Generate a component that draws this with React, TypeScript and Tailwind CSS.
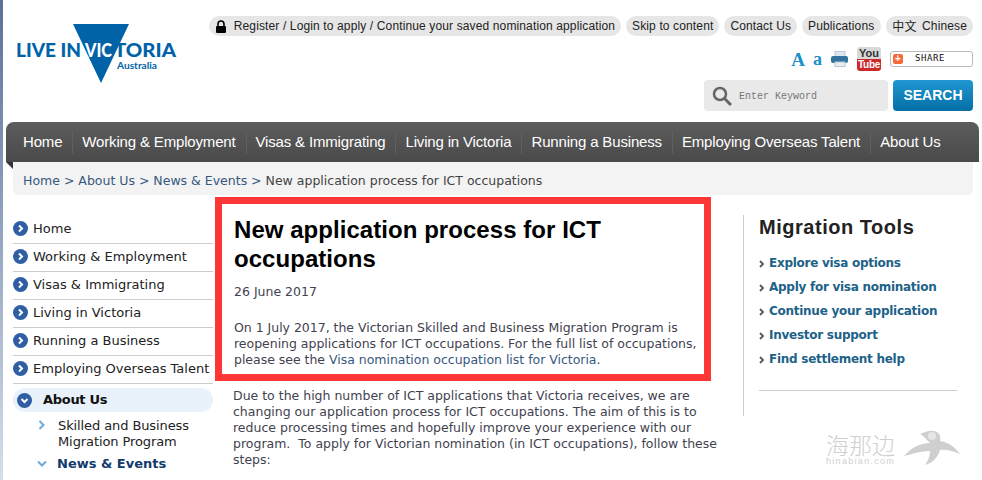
const navTop = ["Home", "Working & Employment", "Visas & Immigrating", "Living in Victoria", "Running a Business", "Employing Overseas Talent", "About Us"];
const sideNav = ["Home", "Working & Employment", "Visas & Immigrating", "Living in Victoria", "Running a Business", "Employing Overseas Talent"];
const tools = ["Explore visa options", "Apply for visa nomination", "Continue your application", "Investor support", "Find settlement help"];

function Dot({ down = false }: { down?: boolean }) {
  return (
    <svg width="15" height="15" viewBox="0 0 15 15" className="shrink-0">
      <circle cx="7.5" cy="7.5" r="7.5" fill="#2f5ea5" />
      <path d={down ? "M4.5 6 L7.5 9 L10.5 6" : "M6 4.5 L9 7.5 L6 10.5"} fill="none" stroke="#fff" strokeWidth="2" />
    </svg>
  );
}

function Pill({ children }: { children: React.ReactNode }) {
  return (
    <span className="flex h-5 items-center rounded-full bg-[#e6e6e6] px-[6px] text-[12px] tracking-[0.13px] whitespace-nowrap text-[#222]">{children}</span>
  );
}

export default function App() {
  return (
    <div className="relative flex h-[480px] w-[982px] overflow-hidden bg-white font-['Liberation_Sans',sans-serif]">
      <div className="h-full w-[3px] shrink-0 bg-gradient-to-b from-[#5a7299] to-[#d5deea]" />
      <div className="flex w-[979px] flex-col">
        <header className="flex h-[122px] shrink-0 justify-between pl-[12px] pr-[9px]">
          <svg width="164" height="62" viewBox="0 0 164 62" className="mt-[23px]">
            <polygon points="58,1 114,1 86,60" fill="#0063a8" />
            <text x="1" y="34" textLength="65" lengthAdjust="spacingAndGlyphs" fontFamily="Lato, sans-serif" fontWeight="900" fontSize="19" fill="#0063a8">LIVE IN</text>
            <text x="70" y="34" textLength="27" lengthAdjust="spacingAndGlyphs" fontFamily="Lato, sans-serif" fontWeight="900" fontSize="19" fill="#fff">VIC</text>
            <text x="99" y="34" textLength="62" lengthAdjust="spacingAndGlyphs" fontFamily="Lato, sans-serif" fontWeight="900" fontSize="19" fill="#0063a8">TORIA</text>
            <text x="102" y="46" textLength="40" lengthAdjust="spacingAndGlyphs" fontFamily="Lato, sans-serif" fontWeight="700" fontSize="9" fill="#0063a8">Australia</text>
          </svg>
          <div className="flex flex-col items-end pt-4">
            <div className="flex gap-[5px]">
              <Pill>
                <svg width="12" height="13" viewBox="0 0 12 13" className="mr-[7px]">
                  <path d="M3 6V4a3 3 0 0 1 6 0v2" fill="none" stroke="#000" strokeWidth="1.6" />
                  <rect x="1" y="6" width="10" height="7" rx="1" fill="#000" />
                </svg>
                Register / Login to apply / Continue your saved nomination application
              </Pill>
              <Pill>Skip to content</Pill>
              <Pill>Contact Us</Pill>
              <Pill><span className="pr-[1px]">Publications</span></Pill>
              <Pill><span className="pr-[2px] font-['Noto_Sans_CJK_SC',sans-serif]">中文</span>&nbsp;Chinese</Pill>
            </div>
            <div className="mt-[11px] flex h-6 items-center">
              <span className="font-['Liberation_Serif',serif] text-[19px] leading-none font-bold text-[#2090c8]">A</span>
              <span className="ml-[8px] font-['Liberation_Serif',serif] text-[18px] leading-none font-bold text-[#2090c8]">a</span>
              <svg width="18" height="16" viewBox="0 0 18 16" className="ml-[9px]">
                <rect x="4" y="0.5" width="10" height="6" fill="#dfe7ee" stroke="#b9c6d3" />
                <rect x="0" y="5" width="17" height="7" rx="2" fill="#33749f" />
                <rect x="4" y="11" width="10" height="4.5" fill="#e9eef3" stroke="#b9c6d3" />
              </svg>
              <div className="ml-[8px] flex h-6 w-[24px] flex-col items-center overflow-hidden rounded-[3px] text-center font-bold">
                <span className="h-[12px] w-full bg-[#d8d8d8] text-[11px] leading-[12px] text-[#333]">You</span>
                <span className="h-[12px] w-full bg-[#cc2a2a] text-[10px] leading-[12px] tracking-[-0.3px] text-white">Tube</span>
              </div>
              <div className="ml-[9px] flex h-4 w-[83px] items-center rounded-[3px] border border-[#bbb] bg-white pl-[2px]">
                <span className="flex h-[10px] w-[10px] items-center justify-center rounded-[2px] bg-[#f8693a] text-[10px] leading-none font-bold text-white">+</span>
                <span className="ml-[12px] font-['DejaVu_Sans_Mono',monospace] text-[9px] tracking-[0.6px] text-[#111]">SHARE</span>
              </div>
            </div>
            <div className="mt-[9px] flex gap-[5px]">
              <div className="flex h-[31px] w-[184px] items-center rounded-[4px] bg-[#e9e9e9] pl-[8px]">
                <svg width="20" height="20" viewBox="0 0 20 20">
                  <circle cx="8" cy="8" r="6" fill="none" stroke="#666" strokeWidth="2.6" />
                  <path d="M12.5 12.5 L19 19" stroke="#666" strokeWidth="3" />
                </svg>
                <span className="ml-[7px] pt-[1px] font-['Liberation_Mono',monospace] text-[10px] text-[#777]">Enter Keyword</span>
              </div>
              <button className="h-[31px] w-[80px] rounded-[4px] bg-gradient-to-b from-[#1f97d2] to-[#046fa5] text-[14px] font-bold text-white">SEARCH</button>
            </div>
          </div>
        </header>

        <nav className="relative ml-[3px] flex h-[40px] w-[973px] shrink-0 items-center rounded-t-[8px] bg-gradient-to-b from-[#5c5c5c] to-[#4a4a4a] pt-[1px] pl-[14px] text-[15px] tracking-[-0.165px] whitespace-nowrap text-white">
          {navTop.map((n, i) => (
            <span key={n} className={i === 0 ? "pl-[3px] pr-[10px]" : "border-l border-[#5f5f5f] pl-[9px] pr-[10px]"}>{n}</span>
          ))}
          <svg width="7" height="7" viewBox="0 0 7 7" className="absolute top-full left-0">
            <polygon points="0,0 7,0 7,7" fill="#333" />
          </svg>
        </nav>
        <div className="ml-[10px] flex h-[33px] w-[960px] shrink-0 items-center rounded-b-[6px] bg-[#f3f3f3] pt-[6px] pl-[10px] font-['DejaVu_Sans',sans-serif] text-[12.5px] text-[#36587f]">
          Home &gt; About Us &gt; News &amp; Events &gt;&nbsp;<span className="text-[#444]">New application process for ICT occupations</span>
        </div>

        <main className="flex min-h-0 flex-1 font-['DejaVu_Sans',sans-serif] text-[12.5px] leading-[16px] text-[#42424f]">
          <aside className="ml-[10px] w-[200px] shrink-0 pt-[21px] text-[#222]">
            {sideNav.map((n) => (
              <div key={n} className="flex h-[28px] items-center gap-[5px] border-b border-[#ccc] pb-[2px] text-[13px] whitespace-nowrap">
                <Dot />
                <span>{n}</span>
              </div>
            ))}
            <div className="mt-[4px] flex h-[24px] items-center gap-[11px] rounded-full bg-[#e9f2fa] pl-[4px] text-[13px] font-bold tracking-[-0.3px] text-[#111]">
              <Dot down />
              <span>About Us</span>
            </div>
            <div className="mt-[6px] flex gap-[12px] pl-[25px] text-[13px] tracking-[-0.1px]">
              <svg width="8" height="10" viewBox="0 0 8 10" className="mt-[2px] shrink-0"><path d="M1.5 1 L5.5 5 L1.5 9" fill="none" stroke="#6fa9d8" strokeWidth="2" /></svg>
              <span>Skilled and Business<br />Migration Program</span>
            </div>
            <div className="mt-[6px] flex items-center gap-[10px] pl-[24px] text-[13px] font-bold text-[#123a6b]">
              <svg width="10" height="8" viewBox="0 0 10 8" className="shrink-0"><path d="M1 1.5 L5 5.5 L9 1.5" fill="none" stroke="#6fa9d8" strokeWidth="2" /></svg>
              <span>News &amp; Events</span>
            </div>
          </aside>

          <section className="ml-[2px] w-[496px] shrink-0 pt-[2px]">
            <div className="h-[184px] border-[7px] border-[#ff3636] pt-[11px] pl-[12px]">
              <h1 className="font-['Liberation_Sans',sans-serif] text-[24px] leading-[29px] font-bold tracking-[0.05px] text-black">New application process for ICT occupations</h1>
              <p className="mt-[11px]">26 June 2017</p>
              <p className="mt-[20px] tracking-[-0.02px] whitespace-nowrap">
                On 1 July 2017, the Victorian Skilled and Business Migration Program is<br />
                reopening applications for ICT occupations. For the full list of occupations,<br />
                please see the <span className="text-[#36587f]">Visa nomination occupation list for Victoria</span>.
              </p>
            </div>
            <p className="mt-[7px] pl-[18px] whitespace-nowrap">
              Due to the high number of ICT applications that Victoria receives, we are<br />
              changing our application process for ICT occupations. The aim of this is to<br />
              reduce processing times and hopefully improve your experience with our<br />
              program.&nbsp; To apply for Victorian nomination (in ICT occupations), follow these<br />
              steps:
            </p>
          </section>

          <aside className="mt-[20px] ml-[32px] h-[201px] w-[214px] shrink-0 border-l border-[#ccc] pl-[15px]">
            <h2 className="font-['Liberation_Sans',sans-serif] text-[20px] leading-[24px] font-bold tracking-[0.53px] text-[#222]">Migration Tools</h2>
            <ul className="mt-[12px]">
              {tools.map((t) => (
                <li key={t} className="flex h-[24px] items-center gap-[4px] text-[12px] font-bold tracking-[-0.27px] whitespace-nowrap text-[#1d6288]">
                  <svg width="6" height="8" viewBox="0 0 6 8" className="mt-[2px] shrink-0"><path d="M1 1 L4 4 L1 7" fill="none" stroke="#555" strokeWidth="1.8" /></svg>
                  {t}
                </li>
              ))}
            </ul>
            <div className="mt-[19px] w-[198px] border-t border-[#ccc]" />
          </aside>
        </main>
      </div>

      <div className="absolute top-[430px] left-[826px] flex items-center">
        <div className="flex flex-col items-center text-[#d0d0d0]">
          <span className="font-['Noto_Sans_CJK_SC',sans-serif] text-[23px] leading-[26px] font-light">海那边</span>
          <span className="text-[9px] leading-[9px] tracking-[1.3px]">hinabian.com</span>
        </div>
        <svg width="58" height="36" viewBox="0 0 58 36" className="ml-[8px]">
          <path d="M1 26 C8 18 17 13 27 13 C22 8 20 5 17 4 C22 2 26 0 31 1 C36 2 38 6 37 11 C45 12 52 17 57 24 C50 21 43 19 37 20 C35 27 30 33 22 35 C25 31 27 26 27 21 C18 21 9 24 1 26 Z" fill="#cfcfcf" />
          <circle cx="29" cy="6" r="4" fill="#e6e6e6" />
        </svg>
      </div>
    </div>
  );
}
